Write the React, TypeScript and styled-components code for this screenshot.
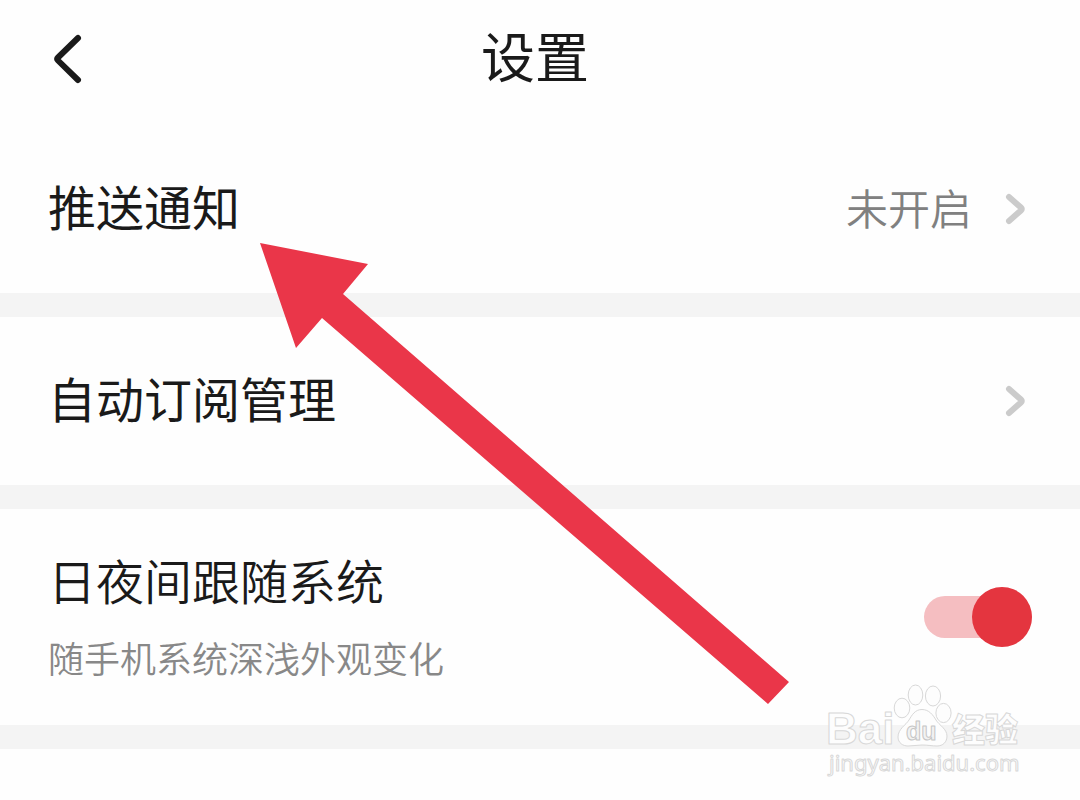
import React, { useState } from "react";
import styled, { createGlobalStyle } from "styled-components";

const GlobalStyle = createGlobalStyle`
  *, *::before, *::after { box-sizing: border-box; }
  body {
    margin: 0;
    background: #fefefe;
    color: #1a1a1a;
    font-family: "Noto Sans CJK SC", sans-serif;
  }
`;

const Page = styled.main`
  position: relative;
  min-height: 100vh;
  overflow: hidden;
  background: #fefefe;
`;

const Header = styled.header`
  display: grid;
  grid-template-columns: 1fr auto 1fr;
  align-items: center;
  height: 125px;
  padding: 0 48px 8px;
`;

const BackButton = styled.button`
  display: flex;
  justify-self: start;
  padding: 0;
  border: 0;
  background: none;
  color: inherit;
  cursor: pointer;
`;

const Title = styled.h1`
  margin: 0;
  padding: 0 10px 8px 0;
  font-size: 54px;
  font-weight: 400;
  line-height: 64px;
`;

const Section = styled.section`
  border-bottom: 24px solid #f4f4f4;
`;

const rowLayout = `
  display: flex;
  align-items: center;
  justify-content: space-between;
  width: 100%;
  padding: 0 48px;
`;

const RowButton = styled.button`
  ${rowLayout}
  height: 168px;
  border: 0;
  background: none;
  color: inherit;
  font: inherit;
  text-align: left;
  cursor: pointer;
`;

const SwitchRow = styled.label`
  ${rowLayout}
  height: 216px;
  cursor: pointer;
`;

const TextGroup = styled.span`
  display: flex;
  flex-direction: column;
  gap: 24px;
`;

const RowTitle = styled.span<{ $light?: boolean }>`
  padding-bottom: 8px;
  font-size: 48px;
  font-weight: ${(p) => (p.$light ? 350 : 400)};
  line-height: 52px;
`;

const Description = styled.span`
  padding-bottom: 4px;
  color: #888;
  font-size: 36px;
  font-weight: 350;
  line-height: 40px;
`;

const Trailing = styled.span`
  display: flex;
  align-items: center;
  gap: 30px;
`;

const Value = styled.span`
  padding-bottom: 4px;
  color: #808080;
  font-size: 42px;
  font-weight: 350;
  line-height: 52px;
`;

const Switch = styled.input`
  display: flex;
  align-items: center;
  appearance: none;
  position: relative;
  width: 108px;
  height: 60px;
  margin: 0;
  cursor: pointer;

  &::before {
    content: "";
    width: 100%;
    height: 42px;
    border-radius: 21px;
    background: #ddd;
  }

  &::after {
    content: "";
    position: absolute;
    left: 0;
    width: 60px;
    height: 60px;
    border-radius: 50%;
    background: #aaa;
  }

  &:checked::before { background: #f5bec1; }
  &:checked::after { left: 48px; background: #e4353f; }
`;

const Arrow = styled.svg`
  position: absolute;
  top: 243px;
  left: 260px;
  pointer-events: none;
`;

const Watermark = styled.svg`
  position: absolute;
  top: 680px;
  right: 52px;
  pointer-events: none;
  fill: #fdfdfd;
  stroke: #d8d8d8;
  stroke-width: 1;
  stroke-linejoin: round;
`;

const Chevron = () => (
  <svg width="30" height="36" viewBox="0 0 30 36" fill="none" stroke="#cbcbcb" strokeWidth="6" strokeLinecap="round" strokeLinejoin="round" aria-hidden="true">
    <path d="M7 6 L19 16.6 Q20.6 18 19 19.4 L7 30" />
  </svg>
);

export default function App() {
  const [followSystem, setFollowSystem] = useState(true);

  return (
    <>
      <GlobalStyle />
      <Page>
        <Header>
          <BackButton type="button" aria-label="返回">
            <svg width="40" height="56" viewBox="0 0 40 56" fill="none" stroke="#1a1a1a" strokeWidth="6" strokeLinecap="round" strokeLinejoin="round" aria-hidden="true">
              <path d="M30 7 L10 26.5 Q8.5 28 10 29.5 L30 49" />
            </svg>
          </BackButton>
          <Title>设置</Title>
        </Header>
        <Section>
          <RowButton type="button">
            <RowTitle>推送通知</RowTitle>
            <Trailing>
              <Value>未开启</Value>
              <Chevron />
            </Trailing>
          </RowButton>
        </Section>
        <Section>
          <RowButton type="button">
            <RowTitle>自动订阅管理</RowTitle>
            <Trailing>
              <Chevron />
            </Trailing>
          </RowButton>
        </Section>
        <Section>
          <SwitchRow htmlFor="follow-system">
            <TextGroup>
              <RowTitle $light>日夜间跟随系统</RowTitle>
              <Description>随手机系统深浅外观变化</Description>
            </TextGroup>
            <Switch
              id="follow-system"
              type="checkbox"
              checked={followSystem}
              onChange={(e) => setFollowSystem(e.target.checked)}
            />
          </SwitchRow>
        </Section>
        <Arrow width="530" height="462" viewBox="0 0 530 462" aria-hidden="true">
          <path d="M0 0 L108 21 L83 51 L529 439 L508 461 L62 75 L36 105 Z" fill="#ea3649" />
        </Arrow>
        <Watermark width="208" height="110" viewBox="0 0 208 110">
          <text x="6" y="64" fontFamily="Liberation Sans, sans-serif" fontWeight="700" fontSize="44">Bai</text>
          <ellipse cx="82" cy="28" rx="7.8" ry="9.8" />
          <ellipse cx="95.5" cy="15" rx="7.3" ry="10" />
          <ellipse cx="113" cy="16" rx="7.6" ry="10" />
          <ellipse cx="123.5" cy="33" rx="7.6" ry="9.6" />
          <path d="M102 29.5 C95 29.5 92 35 89 40 C86 45 78 49 78 57 C78 63 83 66 88 66 C93 66 97 65 102 65 C108 65 112 66 117 66 C123 66 127 62 127 56 C127 49 119 45 116 40 C113 35 109 29.5 102 29.5 Z" />
          <text x="86" y="60" fontFamily="Liberation Sans, sans-serif" fontWeight="700" fontSize="25" fill="#f2f2f2" stroke="#c6c6c6">du</text>
          <text x="132" y="62" fontFamily="Noto Sans CJK SC, sans-serif" fontWeight="900" fontSize="33">经验</text>
          <text x="9" y="91" fontFamily="Noto Sans, sans-serif" fontSize="22">jingyan.baidu.com</text>
        </Watermark>
      </Page>
    </>
  );
}
